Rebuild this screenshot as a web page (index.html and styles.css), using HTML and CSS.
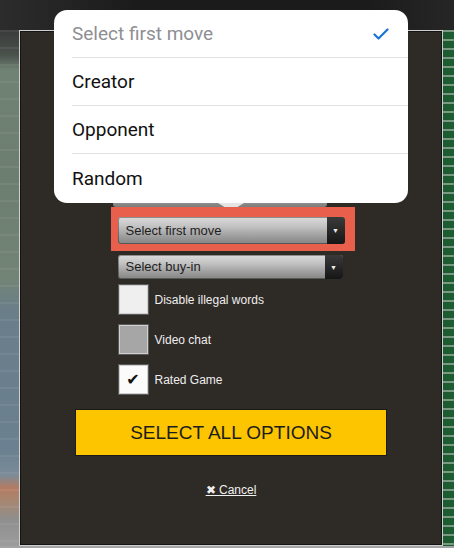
FILE: index.html
```html
<!DOCTYPE html>
<html>
<head>
  <meta charset="UTF-8">
  <title>New game options</title>
  <link rel="stylesheet" href="styles.css">
</head>
<body>
  <div class="screen">
    <div class="topbar"></div>
    <div class="stage">
      <div class="side side-left"></div>
      <div class="modal">
        <div class="form">
          <div class="peek"></div>
          <div class="highlight">
            <div class="select select-big">
              <span class="select-text">Select first move</span>
              <span class="select-arrow">&#9660;</span>
            </div>
          </div>
          <div class="select">
            <span class="select-text">Select buy-in</span>
            <span class="select-arrow">&#9660;</span>
          </div>
          <div class="checks">
            <label class="check-row"><span class="box box-light"></span><span>Disable illegal words</span></label>
            <label class="check-row"><span class="box box-grey"></span><span>Video chat</span></label>
            <label class="check-row"><span class="box box-on">&#10004;</span><span>Rated Game</span></label>
          </div>
        </div>
        <button class="go">SELECT ALL OPTIONS</button>
        <a class="cancel" href="#">&#10006; Cancel</a>
      </div>
      <div class="side side-right"></div>
    </div>
    <div class="floor"></div>
  </div>

  <!-- native picker popover over the modal -->
  <div class="picker">
    <div class="pick pick-current">
      <span>Select first move</span>
      <svg class="tick" width="16" height="12" viewBox="0 0 16 12"><polyline points="1.5,6.5 5.5,10.5 14.5,1.5" fill="none" stroke="#1a73d8" stroke-width="2.2" stroke-linecap="round" stroke-linejoin="round"/></svg>
    </div>
    <div class="pick">Creator</div>
    <div class="pick">Opponent</div>
    <div class="pick">Random</div>
  </div>
  <div class="picker-tip"></div>
</body>
</html>
```

FILE: styles.css
```css
body { margin: 0; width: 454px; height: 548px; overflow: hidden; background: #a2a2a2; font-family: "Liberation Sans", Arial, sans-serif; }
.screen { display: flex; flex-direction: column; height: 548px; }
.topbar { height: 30px; background: linear-gradient(90deg, #2c2c2c, #1b1b1b 30%, #1b1b1b 80%, #262626); }
.stage { display: flex; height: 516px; }
.floor { flex: 1; background: #a3a3a3; }

.side { height: 100%; }
.side-left { width: 19px; background:
  repeating-linear-gradient(180deg, rgba(255,255,255,0.06) 0 2px, rgba(0,0,0,0) 2px 17px),
  linear-gradient(180deg, #3a3a3a 0, #4a524c 25px, #6f8274 40px, #6c7e70 150px, #728476 250px, #6a7e8a 280px, #6b8090 420px, #7a8c98 445px, #b57b62 458px, #a8866f 470px, #8f8f8f 490px, #9c9c9c 516px); }
.side-right { width: 11px; background-image: repeating-linear-gradient(180deg, #7a9882 0 2px, #1d5b30 2px 9px); background-color: #1d5b30; }

.modal { width: 424px; box-sizing: border-box; border: 1px solid #cfcfcf; box-shadow: inset 0 0 0 1px #141414; background: #2e2a26; padding-top: 169px; display: flex; flex-direction: column; align-items: center; }

.form { width: 227px; display: flex; flex-direction: column; }
.peek { height: 7px; width: 214px; margin-left: -5px; border-radius: 0 0 3px 3px; background: linear-gradient(180deg, #9a9a9a, #7c7c7c); }
.highlight { margin-left: -7px; width: 244px; height: 44px; box-sizing: border-box; background: #e8604c; padding: 10px 0 0 7px; }

.select { display: flex; height: 24px; width: 225px; border-radius: 3px; overflow: hidden; margin-top: 4px; background: linear-gradient(180deg, #dcdcdc 0, #c2c2c2 35%, #9a9a9a 75%, #858585 100%); box-shadow: inset 0 0 0 1px rgba(0,0,0,0.35); }
.select-big { width: 227px; height: 27px; margin-top: 0; }
.select-text { flex: 1; font-size: 13px; color: #1e1e1e; line-height: 24px; padding-left: 8px; }
.select-big .select-text { line-height: 27px; }
.select-arrow { width: 18px; background: linear-gradient(180deg, #3a3a3a, #161616); color: #eee; font-size: 7px; display: flex; align-items: center; justify-content: center; }

.checks { display: flex; flex-direction: column; gap: 9px; margin-top: 5px; }
.check-row { display: flex; align-items: center; gap: 6px; font-size: 12px; color: #eeeeee; }
.box { width: 31px; height: 31px; box-sizing: border-box; border: 1px solid #5a5a5a; box-shadow: inset 0 0 0 1px #cfcfcf; display: flex; align-items: center; justify-content: center; font-size: 16px; color: #111; }
.box-light { background: #efefef; }
.box-grey { background: #a6a6a6; }
.box-on { background: #fbfbfb; font-family: "DejaVu Sans", sans-serif; }

.go { margin-top: 14px; width: 312px; height: 47px; background: #fdc400; border: 1px solid #1a1a1a; font-family: "Liberation Sans", Arial, sans-serif; font-size: 19px; color: #1c1c1c; padding: 0; }
.cancel { margin-top: 27px; font-size: 12px; color: #f0f0f0; text-decoration: underline; }

.picker { position: absolute; left: 54px; top: 10px; width: 354px; background: #fff; border-radius: 13px; padding-bottom: 1px; font-family: Roboto, "Liberation Sans", sans-serif; }
.pick { height: 48px; margin-left: 18px; padding-right: 18px; box-sizing: border-box; border-bottom: 1px solid #e2e2e2; display: flex; align-items: center; justify-content: space-between; font-size: 19px; color: #111; }
.pick:last-child { border-bottom: none; }
.pick-current { color: #8e8e93; }
.tick { margin-right: 1px; }
.picker-tip { position: absolute; left: 218px; top: 203px; width: 26px; height: 4px; background: #e4e4e4; clip-path: polygon(0 0, 100% 0, 75% 100%, 25% 100%); }
```
